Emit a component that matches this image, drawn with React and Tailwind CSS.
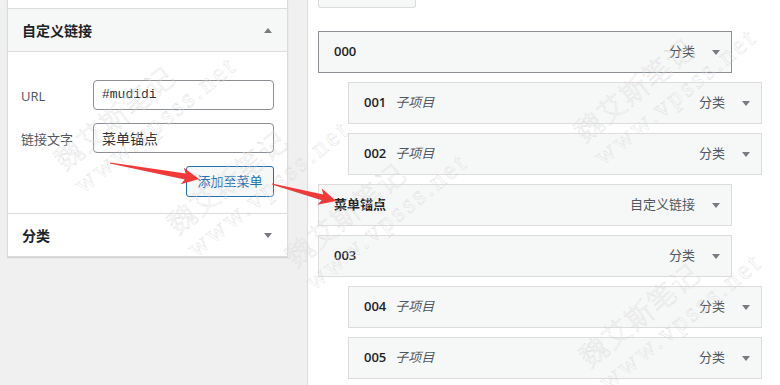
import React from "react";

const font = "font-['Open_Sans','Noto_Sans_CJK_SC',sans-serif]";

const items = [
  { title: "000", type: "分类", active: true },
  { title: "001", sub: true, type: "分类" },
  { title: "002", sub: true, type: "分类" },
  { title: "菜单锚点", type: "自定义链接" },
  { title: "003", type: "分类" },
  { title: "004", sub: true, type: "分类" },
  { title: "005", sub: true, type: "分类" },
];

const marks = [
  [47, 150],
  [160, 214],
  [278, 247],
  [567, 122],
  [572, 347],
];

const Caret = ({ up }) => (
  <svg width="8" height="5" viewBox="0 0 8 5" className="shrink-0">
    <polygon points={up ? "0,5 8,5 4,0" : "0,0 8,0 4,5"} fill="#787c82" />
  </svg>
);

// tapered red arrow from tail to tip
const arrowPoints = (x1, y1, x2, y2) => {
  const dx = x2 - x1;
  const dy = y2 - y1;
  const len = Math.hypot(dx, dy);
  const ux = dx / len;
  const uy = dy / len;
  const nx = -uy;
  const ny = ux;
  const hl = 17;
  const bx = x2 - ux * hl;
  const by = y2 - uy * hl;
  const p = (x, y, w) => [
    [x + nx * w, y + ny * w],
    [x - nx * w, y - ny * w],
  ];
  const [t1, t2] = p(x1, y1, 0.6);
  const [s1, s2] = p(bx + ux * 3, by + uy * 3, 3);
  const [h1, h2] = p(bx, by, 8.5);
  return [t1, s1, h1, [x2, y2], h2, s2, t2].map((q) => q.join(",")).join(" ");
};

const MenuItem = ({ title, sub, type, active }) => (
  <div
    className={`h-[42px] w-[414px] flex items-center pl-[15px] pr-[11px] bg-[#f6f7f7] border ${
      active ? "border-[#8c8f94]" : "border-[#dcdcde]"
    } ${sub ? "ml-[30px]" : ""}`}
  >
    <span className="text-[13px] font-semibold text-[#1d2327]">{title}</span>
    {sub && <span className="ml-[9px] text-[13px] italic text-[#50575e]">子项目</span>}
    <span className="ml-auto text-[13px] text-[#50575e]">{type}</span>
    <span className="ml-[17px]">
      <Caret />
    </span>
  </div>
);

export default function App() {
  return (
    <div className={`relative w-[780px] h-[385px] overflow-hidden flex bg-white ${font}`}>
      {/* Left column */}
      <div className="w-[307px] shrink-0 bg-[#f0f0f1] pl-[7px]">
        <div className="w-[281px] bg-white border-x border-b border-[#dcdcde] shadow-[0_1px_1px_rgba(0,0,0,0.12)]">
          <div className="h-[9px] border-b border-[#dcdcde]" />
          <div className="h-[43px] bg-[#f6f7f7] border-b border-[#dcdcde] flex items-center pl-[14px] pr-[15px]">
            <span className="text-[14px] font-bold text-[#1d2327]">自定义链接</span>
            <span className="ml-auto">
              <Caret up />
            </span>
          </div>
          <div className="h-[162px] border-b border-[#dcdcde] pl-[13px] pr-[13px] pt-[28px]">
            <div className="flex items-center">
              <span className="w-[72px] pt-[3px] text-[13px] text-[#50575e]">URL</span>
              <div className="w-[181px] h-[30px] border border-[#8c8f94] rounded-[4px] flex items-center pl-[8px] text-[13px] text-[#2c3338] font-['Liberation_Mono',monospace]">
                #mudidi
              </div>
            </div>
            <div className="flex items-center mt-[13px]">
              <span className="w-[72px] pt-[3px] text-[13px] text-[#50575e]">链接文字</span>
              <div className="w-[181px] h-[30px] border border-[#8c8f94] rounded-[4px] flex items-center pl-[8px] text-[14px] text-[#2c3338]">
                菜单锚点
              </div>
            </div>
            <div className="flex justify-end mt-[13px]">
              <div className="w-[88px] h-[31px] border border-[#2271b1] rounded-[3px] bg-[#f6f7f7] flex items-center justify-center text-[13px] text-[#2271b1]">
                添加至菜单
              </div>
            </div>
          </div>
          <div className="h-[42px] flex items-center pl-[14px] pr-[15px]">
            <span className="text-[14px] font-bold text-[#1d2327]">分类</span>
            <span className="ml-auto">
              <Caret />
            </span>
          </div>
        </div>
      </div>

      {/* Right column */}
      <div className="flex-1 border-l border-[#dcdcde] pl-[10px]">
        <div className="w-[98px] h-[8px] border border-t-0 border-[#dcdcde] bg-[#f6f7f7] rounded-b-[3px]" />
        <div className="mt-[23px] flex flex-col gap-[9px]">
          {items.map((it) => (
            <MenuItem key={it.title} {...it} />
          ))}
        </div>
      </div>

      {/* Watermarks */}
      {marks.map(([x, y], i) => (
        <div
          key={i}
          className="absolute pointer-events-none origin-top-left -rotate-[39deg] leading-[32px] whitespace-nowrap font-light text-white/0 [-webkit-text-stroke:0.35px_#dadada]"
          style={{ left: x, top: y }}
        >
          <div className="text-[28px] tracking-[1px] font-['Noto_Sans_CJK_SC',sans-serif]">魏艾斯笔记</div>
          <div className="text-[27px] tracking-[3px] font-['Liberation_Serif',serif]">www.vpsss.net</div>
        </div>
      ))}

      {/* Red arrows */}
      <svg className="absolute left-0 top-0 pointer-events-none" width="780" height="385">
        <polygon points={arrowPoints(110, 163, 199, 179)} fill="#f03a3a" />
        <polygon points={arrowPoints(272, 184, 336, 201)} fill="#f03a3a" />
      </svg>
    </div>
  );
}
